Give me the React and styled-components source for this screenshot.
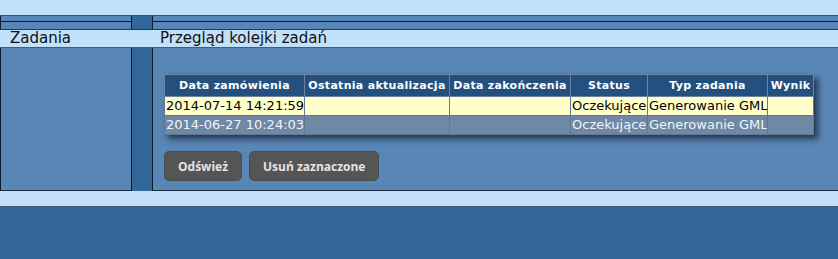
import React from "react";
import styled, { createGlobalStyle } from "styled-components";

const GlobalStyle = createGlobalStyle`
  html, body {
    margin: 0;
    padding: 0;
    background: #336699;
  }
  body {
    font-family: "DejaVu Sans", Verdana, sans-serif;
  }
`;

const jobs = [
  {
    ordered: "2014-07-14 14:21:59",
    updated: "",
    finished: "",
    status: "Oczekujące",
    type: "Generowanie GML",
    result: "",
  },
  {
    ordered: "2014-06-27 10:24:03",
    updated: "",
    finished: "",
    status: "Oczekujące",
    type: "Generowanie GML",
    result: "",
  },
];

const columns = [
  { title: "Data zamówienia", width: 140 },
  { title: "Ostatnia aktualizacja", width: 145 },
  { title: "Data zakończenia", width: 121 },
  { title: "Status", width: 77 },
  { title: "Typ zadania", width: 120 },
  { title: "Wynik", width: 46 },
];

export default function App() {
  return (
    <>
      <GlobalStyle />
      <Page>
        <TopBand />
        <Layout>
          <Cap $side="left">
            <CapLine />
          </Cap>
          <Gutter />
          <Cap $side="right">
            <CapLine />
          </Cap>

          <HeaderBand>
            <HeaderTitle>Zadania</HeaderTitle>
            <span />
            <HeaderTitle $inset>Przegląd kolejki zadań</HeaderTitle>
          </HeaderBand>

          <PanelBody $side="left" />
          <Gutter />
          <PanelBody $side="right">
            <QueueTable>
              <colgroup>
                {columns.map((c) => (
                  <col key={c.title} style={{ width: c.width }} />
                ))}
              </colgroup>
              <thead>
                <tr>
                  {columns.map((c) => (
                    <Th key={c.title}>{c.title}</Th>
                  ))}
                </tr>
              </thead>
              <tbody>
                {jobs.map((job, i) => (
                  <Row key={job.ordered} $alt={i % 2 === 1}>
                    <Td>{job.ordered}</Td>
                    <Td>{job.updated}</Td>
                    <Td>{job.finished}</Td>
                    <Td>{job.status}</Td>
                    <Td>{job.type}</Td>
                    <Td>{job.result}</Td>
                  </Row>
                ))}
              </tbody>
            </QueueTable>
            <Actions>
              <Button>Odśwież</Button>
              <Button>Usuń zaznaczone</Button>
            </Actions>
          </PanelBody>
        </Layout>
        <BottomBand />
      </Page>
    </>
  );
}

const Page = styled.div`
  width: 838px;
  min-height: 259px;
  background: #336699;
`;

const TopBand = styled.div`
  height: 15px;
  background: #c1e0f9;
  border-bottom: 1px solid #35587c;
`;

const Layout = styled.div`
  display: grid;
  grid-template-columns: 132px 20px 1fr;
`;

const Gutter = styled.div`
  background: #336699;
`;

const Cap = styled.div`
  height: 13px;
  padding-top: 5px;
  box-sizing: border-box;
  background: #5886b6;
  border-left: 1px solid #0d1a26;
  border-right: ${(p) => (p.$side === "left" ? "1px solid #0d1a26" : "none")};
`;

const CapLine = styled.div`
  border-top: 1px solid #0d1a26;
  margin-left: -1px;
  margin-right: ${(p) => (p.$side === "left" ? "-1px" : "0")};
`;

const HeaderBand = styled.div`
  grid-column: 1 / -1;
  display: grid;
  grid-template-columns: 132px 20px 1fr;
  align-items: center;
  height: 17px;
  background: #c1e0f9;
  border-top: 1px solid #26384c;
  border-bottom: 1px solid #4a5b6c;
`;

const HeaderTitle = styled.span`
  padding-left: ${(p) => (p.$inset ? "8px" : "10px")};
  font-size: 15px;
  line-height: 17px;
  color: #111;
  white-space: nowrap;
`;

const PanelBody = styled.div`
  height: 143px;
  box-sizing: border-box;
  background: #5886b6;
  border-left: 1px solid #0d1a26;
  border-right: ${(p) => (p.$side === "left" ? "1px solid #0d1a26" : "none")};
  border-bottom: 1px solid #1c2a38;
  padding: 26px 0 0 11px;
`;

const QueueTable = styled.table`
  border-collapse: collapse;
  table-layout: fixed;
  width: 649px;
  border: 1px solid #7089a6;
  box-shadow: 4px 4px 6px rgba(20, 30, 45, 0.75);
`;

const Th = styled.th`
  height: 21px;
  padding: 0 2px;
  background: #23507f;
  color: #fff;
  font-size: 11px;
  font-weight: bold;
  letter-spacing: 0.3px;
  text-align: center;
  white-space: nowrap;
  border: 1px solid #6d84a0;
`;

const Row = styled.tr`
  background: ${(p) => (p.$alt ? "#6e88a6" : "#ffffcc")};
  color: ${(p) => (p.$alt ? "#f2f4f8" : "#000")};
`;

const Td = styled.td`
  height: 18px;
  padding: 0 1px;
  font-size: 13px;
  line-height: 18px;
  white-space: nowrap;
  overflow: hidden;
  border: 1px solid #5f7896;
`;

const Actions = styled.div`
  display: flex;
  gap: 7px;
  margin-top: 16px;
`;

const Button = styled.button`
  height: 30px;
  padding: 0 13px;
  border: 1px solid #4c4c4c;
  border-radius: 5px;
  background: #555555;
  color: #e4e4e4;
  font-family: "Open Sans", sans-serif;
  font-size: 12px;
  font-weight: bold;
  cursor: pointer;
`;

const BottomBand = styled.div`
  height: 15px;
  background: #c1e0f9;
  border-bottom: 1px solid #4a5b6c;
`;
